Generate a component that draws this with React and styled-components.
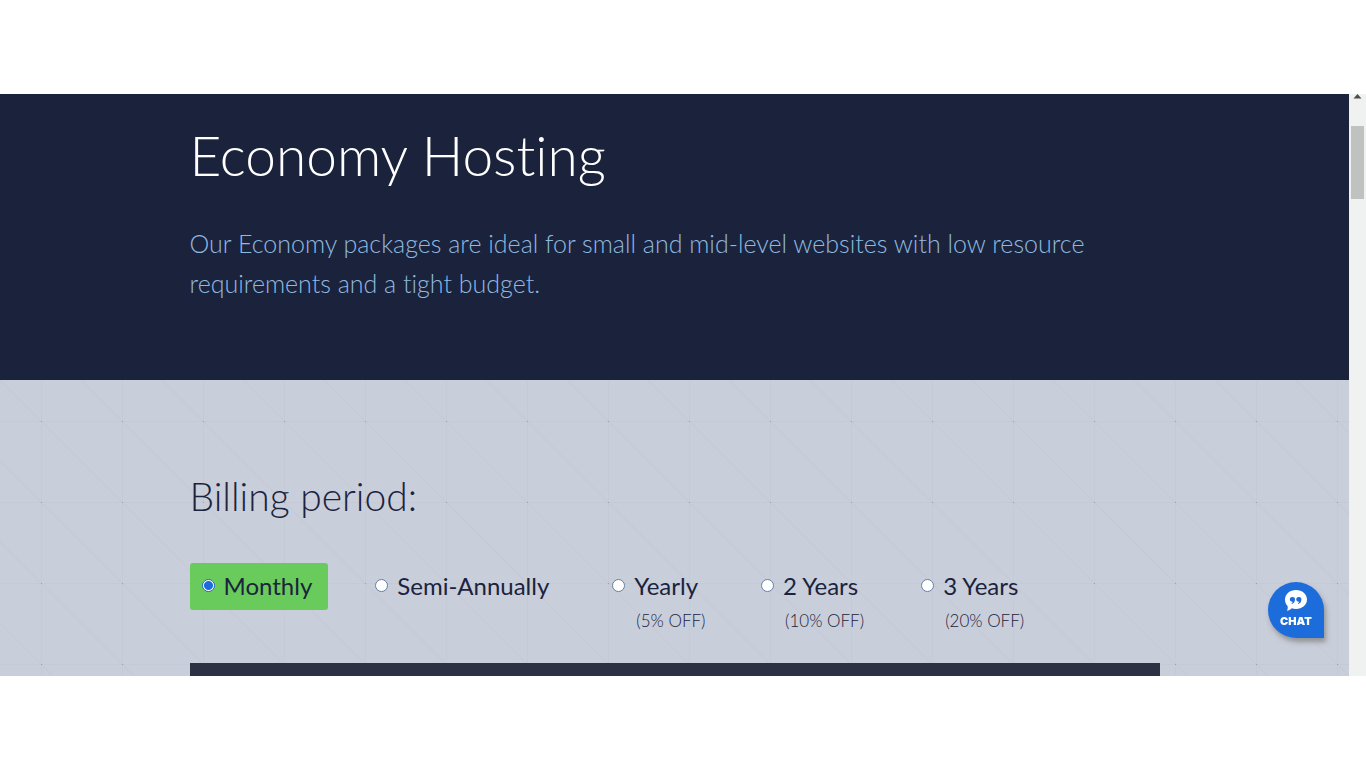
import React, { useState } from 'react';
import styled, { createGlobalStyle } from 'styled-components';

const GlobalStyle = createGlobalStyle`
  * {
    box-sizing: border-box;
  }

  body {
    margin: 0;
    background: #ffffff;
    color: #1b233d;
    font-family: Lato, 'Open Sans', sans-serif;
    font-variant-ligatures: none;
  }
`;

const Page = styled.div`
  display: flex;
  height: 100vh;
  padding: 94px 0 92px;
`;

const Content = styled.main`
  display: flex;
  flex: 1;
  flex-direction: column;
  min-width: 0;
  overflow: hidden;
`;

const Container = styled.div`
  width: 100%;
  max-width: 970px;
  margin: 0 auto;
`;

const StyledHero = styled.header`
  flex-shrink: 0;
  padding: 29px 0 77px;
  background: #1b233c;

  h1 {
    margin: 0 0 36px;
    color: #ffffff;
    font-size: 55px;
    font-weight: 300;
    line-height: 64px;
  }

  p {
    margin: 0;
    color: #8fb9e0;
    font-size: 25px;
    font-weight: 300;
    line-height: 40px;
  }
`;

const StyledBilling = styled.section`
  flex: 1 0 auto;
  padding-top: 90px;
  background-color: #c9cedb;
  background-image: radial-gradient(circle at 0 0, #9a9fab 1px, transparent 1px),
    linear-gradient(to right, #c6c9d6 1px, transparent 1px),
    linear-gradient(to bottom, #c6c9d6 1px, transparent 1px),
    linear-gradient(to top right, transparent 49%, #c7cad6 50%, transparent 51%);
  background-position: 41px 41px;
  background-size: 81px 81px;

  h2 {
    margin: 0 0 41px;
    font-size: 39px;
    font-weight: 300;
    line-height: 52px;
  }
`;

const Periods = styled.div`
  display: flex;
  align-items: flex-start;
  gap: 35px;
  height: 100px;
`;

const Period = styled.label`
  display: grid;
  grid-template-columns: 13px auto;
  column-gap: 9px;
  align-items: center;
  padding: 0 16px 2px 12px;
  border-radius: 3px;
  background: ${({ $active }) => ($active ? '#69cb5b' : 'transparent')};
  font-size: 24px;
  line-height: 45px;
  white-space: nowrap;
  cursor: pointer;

  /* the discount may run past its label without widening it */
  small {
    grid-column: 2;
    width: 0;
    padding-left: 2px;
    font-size: 17px;
    font-weight: 300;
    line-height: 26px;
  }
`;

const Radio = styled.input`
  appearance: none;
  width: 13px;
  height: 13px;
  margin: 0;
  border: 1px solid #66809f;
  border-radius: 50%;
  background: #ffffff;

  &:checked {
    border-color: #1c6bdb;
    background: radial-gradient(circle, #1c6bdb 4px, #ffffff 5px);
  }
`;

const Panel = styled.div`
  height: 13px;
  background: #2c3144;
`;

const Scrollbar = styled.div`
  display: flex;
  flex: 0 0 17px;
  flex-direction: column;
  align-items: center;
  background: #f0f2f1;

  svg {
    display: block;
    margin-bottom: 27px;
  }
`;

const Thumb = styled.div`
  width: 13px;
  height: 73px;
  background: #c0c2c0;
`;

const ChatButton = styled.button`
  position: fixed;
  right: 42px;
  bottom: 130px;
  display: flex;
  flex-direction: column;
  align-items: center;
  gap: 3px;
  width: 56px;
  height: 56px;
  padding: 8px 0 0;
  border: 0;
  border-radius: 28px 28px 0 28px;
  background: #1c6ddb;
  box-shadow: 2px 4px 5px rgba(90, 90, 80, 0.5);
  color: #ffffff;
  font-family: Inter, sans-serif;
  font-size: 11px;
  font-weight: 900;
  line-height: 15px;
  cursor: pointer;
`;

const periods = [
  { id: 'monthly', name: 'Monthly' },
  { id: 'semi', name: 'Semi-Annually' },
  { id: 'yearly', name: 'Yearly', discount: '(5% OFF)' },
  { id: 'two-years', name: '2 Years', discount: '(10% OFF)' },
  { id: 'three-years', name: '3 Years', discount: '(20% OFF)' },
];

const Hero = () => (
  <StyledHero>
    <Container>
      <h1>Economy Hosting</h1>
      <p>
        Our Economy packages are ideal for small and mid-level websites with low resource
        requirements and a tight budget.
      </p>
    </Container>
  </StyledHero>
);

const Billing = () => {
  const [selected, setSelected] = useState('monthly');

  return (
    <StyledBilling>
      <Container>
        <h2 id="billing-title">Billing period:</h2>
        <Periods role="radiogroup" aria-labelledby="billing-title">
          {periods.map(({ id, name, discount }) => (
            <Period key={id} htmlFor={id} $active={selected === id}>
              <Radio
                type="radio"
                id={id}
                name="billing"
                checked={selected === id}
                onChange={() => setSelected(id)}
              />
              <span>{name}</span>
              {discount && <small>{discount}</small>}
            </Period>
          ))}
        </Periods>
        <Panel />
      </Container>
    </StyledBilling>
  );
};

const Chat = () => (
  <ChatButton type="button">
    <svg width="22" height="21" viewBox="0 0 22 21" aria-hidden="true">
      <path
        d="M11 0C17.200 0 22 4.200 22 9.600s-4.800 9.400-11 9.400c-1.600 0-3-.2-4.300-.7C5.300 19.700 3.600 20.600 2 21c.6-1.300.8-3.100.7-4.700C1 14.600 0 12.300 0 9.600 0 4.200 4.800 0 11 0z"
        fill="#ffffff"
      />
      <path
        d="M7.600 7a2.400 2.400 0 0 1 2.400 2.500c0 2.300-1.200 3.900-3.200 4.500l-.3-.8c.8-.4 1.200-.9 1.300-1.500A2.400 2.400 0 1 1 7.600 7zM14 7a2.400 2.400 0 0 1 2.400 2.500c0 2.300-1.200 3.900-3.200 4.500l-.3-.8c.8-.4 1.200-.9 1.300-1.500A2.400 2.400 0 1 1 14 7z"
        fill="#1c6ddb"
      />
    </svg>
    CHAT
  </ChatButton>
);

const App = () => (
  <>
    <GlobalStyle />
    <Page>
      <Content>
        <Hero />
        <Billing />
      </Content>
      <Scrollbar aria-hidden="true">
        <svg width="9" height="5" viewBox="0 0 9 5">
          <path d="M0.500 4.500L4.500 0L8.500 4.500z" fill="#504a4a" />
        </svg>
        <Thumb />
      </Scrollbar>
      <Chat />
    </Page>
  </>
);

export default App;
